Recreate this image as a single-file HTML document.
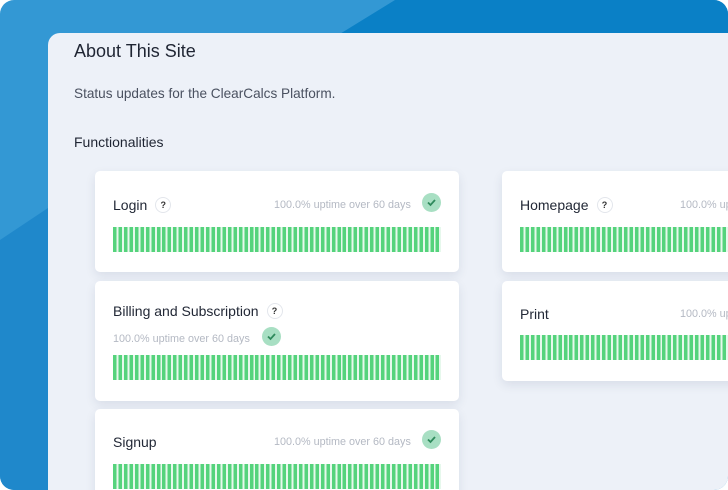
<!DOCTYPE html>
<html><head><style>
html,body{margin:0;padding:0;background:#fff;width:728px;height:490px;overflow:hidden;}
body{position:relative;font-family:"Liberation Sans",sans-serif;}
#wrap{position:absolute;left:0;top:0;width:728px;height:490px;overflow:hidden;border-radius:14px;}
.bg{position:absolute;left:0;top:0;width:728px;height:490px;background:#3398d4;}
.panel{position:absolute;left:48px;top:33px;width:700px;height:470px;background:#edf1f8;border-radius:12px 0 0 0;}
h1{position:absolute;left:74px;top:41px;margin:0;font-size:18px;font-weight:normal;color:#1f2533;}
.sub{position:absolute;left:74px;top:86px;font-size:13.6px;color:#4a5160;}
.fn{position:absolute;left:74px;top:134px;font-size:14px;color:#1f2533;}
.card{position:absolute;background:#fff;border-radius:5px;box-shadow:0 4px 10px rgba(40,60,100,.10);}
.t{position:absolute;font-size:14px;color:#222836;}
.q{display:inline-block;width:14px;height:14px;border:1px solid #e3e6ec;border-radius:50%;font-size:9px;text-align:center;line-height:14px;margin-left:8px;vertical-align:2px;font-weight:bold;color:#333;}
.u{position:absolute;font-size:10.8px;color:#b4b9c3;white-space:nowrap;}
.ck{position:absolute;width:19px;height:19px;border-radius:50%;background:#a8dfc3;}
.bars{position:absolute;height:25px;background:repeating-linear-gradient(90deg,#55d37c 0,#55d37c 3.5px,#e6f8ec 3.5px,#e6f8ec 5.47px);}
</style></head><body>
<div id="wrap">
<div class="bg">
<svg width="728" height="490" style="position:absolute;left:0;top:0">
<polygon points="395,0 728,0 728,40 330,40" fill="#0a80c6"/>
<polygon points="0,240 60,200 60,490 0,490" fill="#1f88cb"/>
</svg>
<div class="panel"></div>
</div>
<h1>About This Site</h1>
<div class="sub">Status updates for the ClearCalcs Platform.</div>
<div class="fn">Functionalities</div>

<div class="card" style="left:95px;top:171px;width:364px;height:101px"></div>
<div class="t" style="left:113px;top:197px">Login<span class="q">?</span></div>
<div class="u" style="left:274px;top:199px">100.0% uptime over 60 days</div>
<div class="ck" style="left:422px;top:193px"><svg width="19" height="19"><path d="M6 9.5l2.5 2.5 4.5-5" stroke="#2f8a5c" stroke-width="1.8" fill="none"/></svg></div>
<div class="bars" style="left:113px;top:227px;width:328px"></div>

<div class="card" style="left:95px;top:281px;width:364px;height:120px"></div>
<div class="t" style="left:113px;top:303px">Billing and Subscription<span class="q">?</span></div>
<div class="u" style="left:113px;top:333px">100.0% uptime over 60 days</div>
<div class="ck" style="left:262px;top:327px"><svg width="19" height="19"><path d="M6 9.5l2.5 2.5 4.5-5" stroke="#2f8a5c" stroke-width="1.8" fill="none"/></svg></div>
<div class="bars" style="left:113px;top:355px;width:328px"></div>

<div class="card" style="left:95px;top:409px;width:364px;height:100px"></div>
<div class="t" style="left:113px;top:434px">Signup</div>
<div class="u" style="left:274px;top:436px">100.0% uptime over 60 days</div>
<div class="ck" style="left:422px;top:430px"><svg width="19" height="19"><path d="M6 9.5l2.5 2.5 4.5-5" stroke="#2f8a5c" stroke-width="1.8" fill="none"/></svg></div>
<div class="bars" style="left:113px;top:464px;width:328px"></div>

<div class="card" style="left:502px;top:171px;width:260px;height:101px"></div>
<div class="t" style="left:520px;top:197px">Homepage<span class="q">?</span></div>
<div class="u" style="left:680px;top:199px">100.0% uptime over 60 days</div>
<div class="bars" style="left:520px;top:227px;width:220px"></div>

<div class="card" style="left:502px;top:281px;width:260px;height:100px"></div>
<div class="t" style="left:520px;top:306px">Print</div>
<div class="u" style="left:680px;top:308px">100.0% uptime over 60 days</div>
<div class="bars" style="left:520px;top:335px;width:220px"></div>
</div>
</body></html>
